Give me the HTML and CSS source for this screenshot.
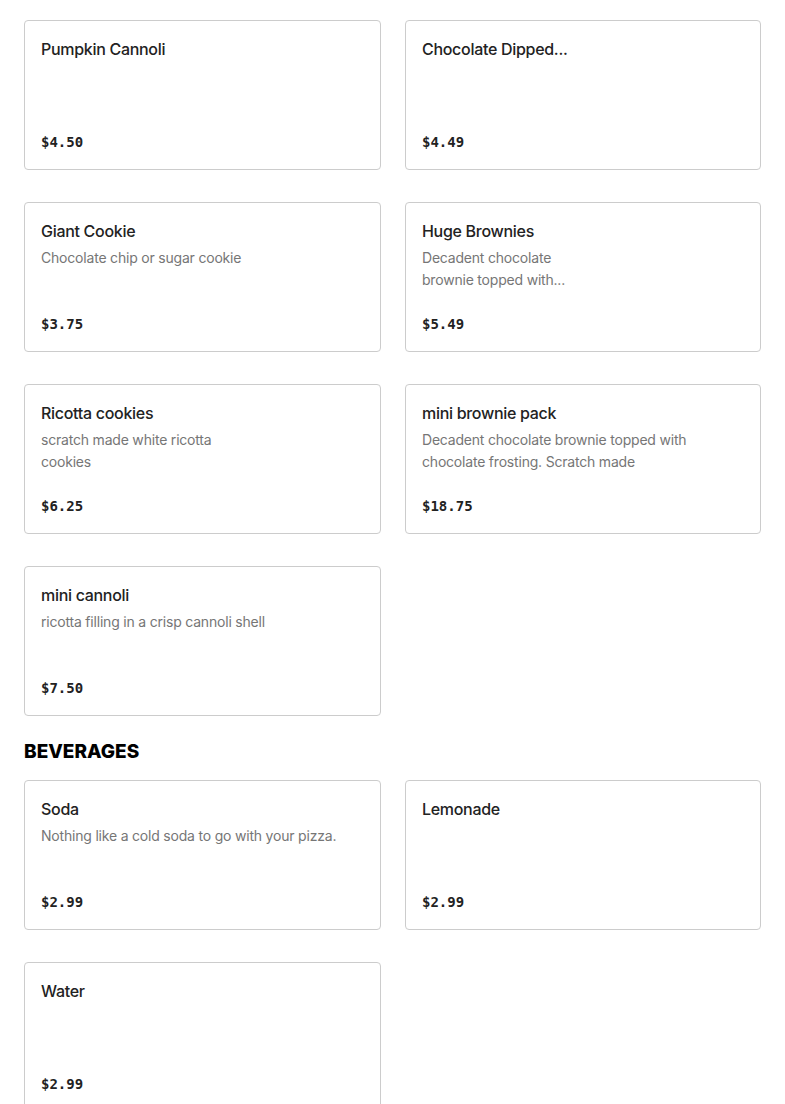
FILE: index.html
```html
<!DOCTYPE html>
<html>
<head>
<meta charset="utf-8">
<link rel="stylesheet" href="styles.css">
</head>
<body>
<main class="menu">
  <section class="grid">
    <div class="card"><div class="title">Pumpkin Cannoli</div><div class="desc"></div><div class="price">$4.50</div></div>
    <div class="card"><div class="title">Chocolate Dipped...</div><div class="desc"></div><div class="price">$4.49</div></div>
    <div class="card"><div class="title">Giant Cookie</div><div class="desc">Chocolate chip or sugar cookie</div><div class="price">$3.75</div></div>
    <div class="card"><div class="title">Huge Brownies</div><div class="desc">Decadent chocolate<br>brownie topped with...</div><div class="price">$5.49</div></div>
    <div class="card"><div class="title">Ricotta cookies</div><div class="desc">scratch made white ricotta<br>cookies</div><div class="price">$6.25</div></div>
    <div class="card"><div class="title">mini brownie pack</div><div class="desc">Decadent chocolate brownie topped with<br>chocolate frosting. Scratch made</div><div class="price">$18.75</div></div>
    <div class="card"><div class="title">mini cannoli</div><div class="desc">ricotta filling in a crisp cannoli shell</div><div class="price">$7.50</div></div>
  </section>
  <h2 class="heading">BEVERAGES</h2>
  <section class="grid">
    <div class="card"><div class="title">Soda</div><div class="desc">Nothing like a cold soda to go with your pizza.</div><div class="price">$2.99</div></div>
    <div class="card"><div class="title">Lemonade</div><div class="desc"></div><div class="price">$2.99</div></div>
    <div class="card"><div class="title">Water</div><div class="desc"></div><div class="price">$2.99</div></div>
  </section>
</main>
</body>
</html>
```
FILE: styles.css
```css
html, body {
  margin: 0;
  padding: 0;
  background: #fff;
}
body {
  font-family: Inter, "Liberation Sans", sans-serif;
  color: #222;
}
.menu {
  padding: 20px 24px 0 24px;
}
.grid {
  display: grid;
  grid-template-columns: 357px 356px;
  column-gap: 24px;
  row-gap: 32px;
}
.card {
  height: 150px;
  box-sizing: border-box;
  border: 1px solid #cccccc;
  border-radius: 4px;
  padding: 16px;
  display: flex;
  flex-direction: column;
}
.title {
  font-size: 16px;
  line-height: 24px;
  font-weight: 500;
  letter-spacing: -0.3px;
  color: #222;
}
.desc {
  margin-top: 4px;
  font-size: 14px;
  line-height: 22px;
  letter-spacing: -0.2px;
  color: #767676;
}
.price {
  margin-top: auto;
  font-family: "DejaVu Sans Mono", "Liberation Mono", monospace;
  font-weight: bold;
  font-size: 14px;
  line-height: 22px;
  color: #222;
}
.heading {
  margin: 24px 0 16px 0;
  font-size: 19px;
  line-height: 24px;
  font-weight: 800;
  color: #000;
}
```
